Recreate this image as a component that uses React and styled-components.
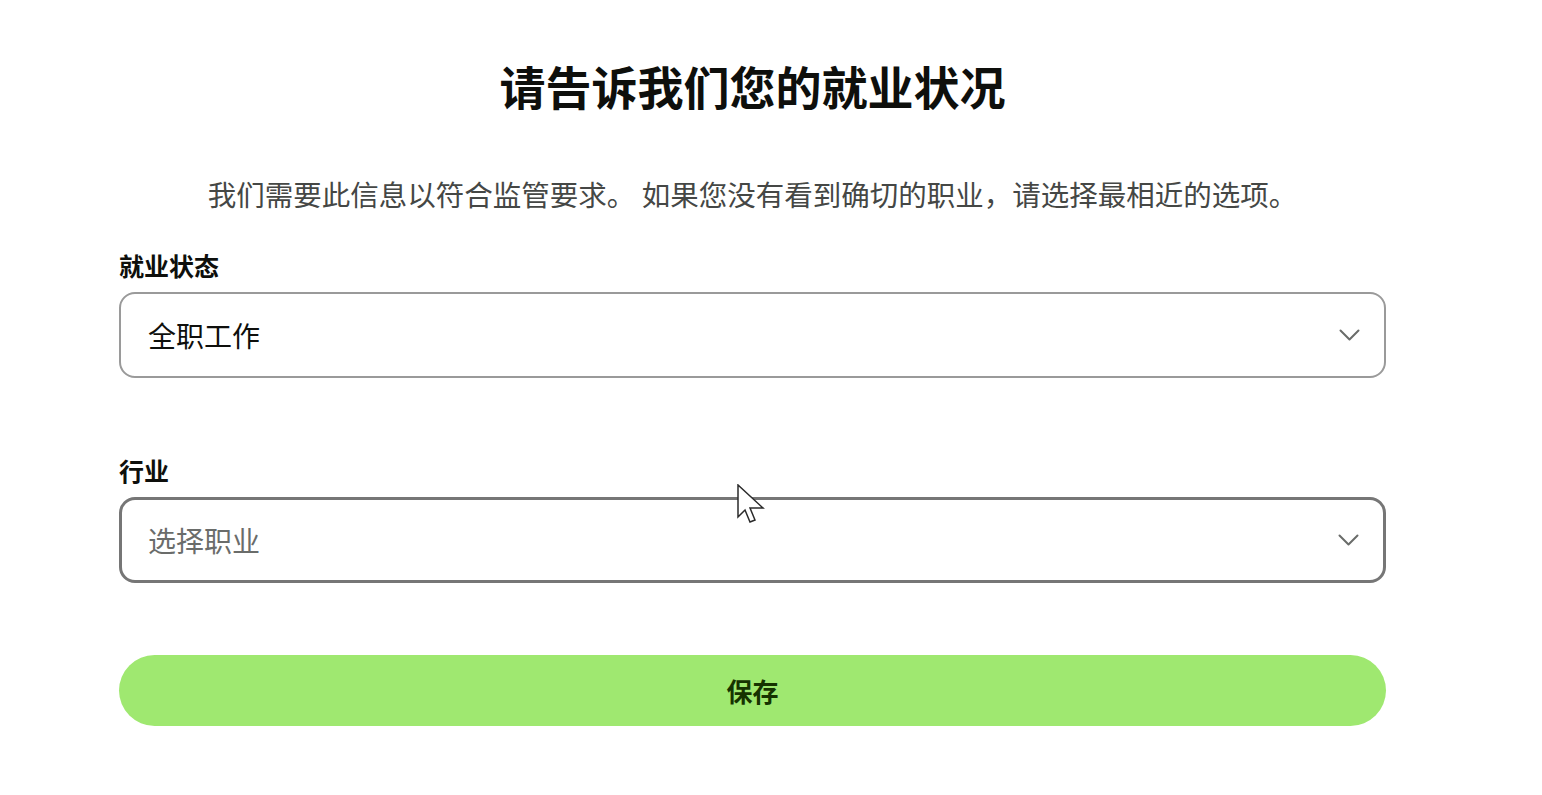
import styled, { createGlobalStyle } from 'styled-components';

const GlobalStyle = createGlobalStyle`
  html, body {
    margin: 0;
    padding: 0;
    background: #ffffff;
  }
  body {
    font-family: "Noto Sans CJK SC", "Noto Sans", "Liberation Sans", sans-serif;
    color: #0e0f0c;
  }
`;

// Page wrapper, the form is a bit left of the window centre
const Page = styled.div`
  position: relative;
  min-height: 795px;
  padding: 57px 0 0 119px;
  box-sizing: border-box;
`;

const Form = styled.div`
  width: 1267px;
  display: flex;
  flex-direction: column;
`;

const Title = styled.h1`
  margin: 0;
  font-size: 46px;
  line-height: 56px;
  font-weight: 700;
  text-align: center;
  color: #0e0f0c;
`;

const Intro = styled.p`
  margin: 63px 0 38px;
  font-size: 28.5px;
  line-height: 36px;
  text-align: center;
  color: #454745;
`;

const Field = styled.div`
  display: flex;
  flex-direction: column;
  gap: 12px;
  margin-bottom: ${(p) => p.$gap}px;
`;

const Label = styled.label`
  font-size: 25px;
  line-height: 30px;
  font-weight: 700;
  color: #0e0f0c;
`;

const Select = styled.div`
  height: 86px;
  box-sizing: border-box;
  display: flex;
  align-items: center;
  justify-content: space-between;
  padding: 0 24px 0 ${(p) => (p.$active ? 26 : 27)}px;
  border: ${(p) => (p.$active ? '3px solid #767676' : '2px solid #9a9a9a')};
  border-radius: 16px;
  background: #fff;
`;

const Value = styled.span`
  font-size: 28px;
  line-height: 36px;
  color: ${(p) => (p.$placeholder ? '#6a6c6a' : '#0e0f0c')};
`;

const Chevron = styled.svg`
  width: 21px;
  height: 12px;
  flex: none;
`;

const SaveButton = styled.button`
  height: 71px;
  border: none;
  border-radius: 36px;
  background: #9fe870;
  color: #163300;
  font-family: inherit;
  font-size: 26px;
  font-weight: 700;
  cursor: pointer;
`;

// mouse pointer that sits over the second select in the shot
const Pointer = styled.svg`
  position: absolute;
  left: 737px;
  top: 484px;
  width: 28px;
  height: 40px;
  pointer-events: none;
`;

function ChevronDown() {
  return (
    <Chevron viewBox="0 0 21 12" fill="none">
      <path d="M1.5 1.5 L10.5 10.5 L19.5 1.5" stroke="#6a6c6a" strokeWidth="2" strokeLinecap="round" strokeLinejoin="round" />
    </Chevron>
  );
}

export default function App() {
  return (
    <>
      <GlobalStyle />
      <Page>
        <Form>
          <Title>请告诉我们您的就业状况</Title>
          <Intro>我们需要此信息以符合监管要求。 如果您没有看到确切的职业，请选择最相近的选项。</Intro>

          <Field $gap={77}>
            <Label>就业状态</Label>
            <Select>
              <Value>全职工作</Value>
              <ChevronDown />
            </Select>
          </Field>

          <Field $gap={72}>
            <Label>行业</Label>
            <Select $active>
              <Value $placeholder>选择职业</Value>
              <ChevronDown />
            </Select>
          </Field>

          <SaveButton>保存</SaveButton>
        </Form>
        <Pointer viewBox="0 0 28 40">
          <path d="M1 1 L1 33 L8 26 L13 38 L18 36 L13 24 L26 24 Z" fill="#fff" stroke="#2b2b2b" strokeWidth="1.5" strokeLinejoin="miter" />
        </Pointer>
      </Page>
    </>
  );
}
